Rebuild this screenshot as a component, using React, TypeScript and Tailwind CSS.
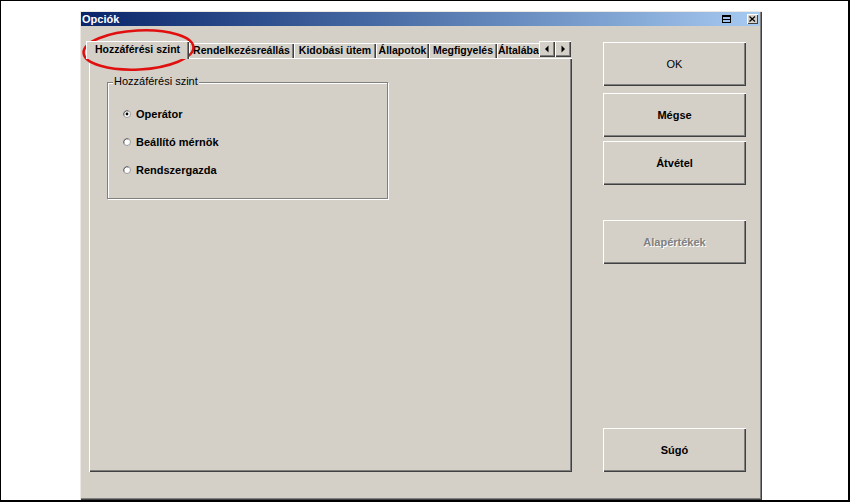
import React from "react";

const raised =
  "shadow-[inset_1px_1px_#ffffff,inset_-1px_-1px_#404040,inset_-2px_-2px_#808080]";

function Tab({ label, w, selected }: { label: string; w: string; selected?: boolean }) {
  if (selected) {
    return (
      <div
        className={`${w} -ml-[3px] h-[18px] self-start relative z-10 bg-[#d4d0c8] flex items-center justify-center text-[10.5px] font-bold text-black shadow-[inset_1px_1px_#ffffff,inset_-1px_0_#404040,inset_-2px_0_#808080]`}
      >
        {label}
      </div>
    );
  }
  return (
    <div
      className={`${w} h-[15px] bg-[#d4d0c8] flex items-center justify-center text-[10.5px] font-bold text-black overflow-hidden whitespace-nowrap shadow-[inset_1px_1px_#ffffff,inset_-1px_0_#404040,inset_-2px_0_#808080]`}
    >
      {label}
    </div>
  );
}

function Arrow({ dir }: { dir: "l" | "r" }) {
  return (
    <div className={`w-[16px] h-[16px] self-start bg-[#d4d0c8] flex items-center justify-center ${raised}`}>
      <svg width="8" height="8" viewBox="0 0 8 8">
        {dir === "l" ? <polygon points="5.5,0.5 5.5,7.5 2,4" fill="#000" /> : <polygon points="2.5,0.5 2.5,7.5 6,4" fill="#000" />}
      </svg>
    </div>
  );
}

function Radio({ label, checked }: { label: string; checked?: boolean }) {
  return (
    <div className="h-[28px] flex items-center gap-[5px]">
      <svg width="8" height="8" viewBox="0 0 8 8" className="shrink-0">
        <circle cx="4" cy="4" r="3.5" fill="#ffffff" stroke="#9a9a9a" strokeWidth="1" />
        <path d="M1 5.5 A3.5 3.5 0 0 1 5.5 1" fill="none" stroke="#606060" strokeWidth="1" />
        {checked && <circle cx="4" cy="4" r="1.4" fill="#000" />}
      </svg>
      <span className="text-[11px] font-bold text-black leading-none">{label}</span>
    </div>
  );
}

function Btn({ label, bold, disabled, extra }: { label: string; bold?: boolean; disabled?: boolean; extra?: string }) {
  return (
    <div
      className={`w-[143px] h-[44px] shrink-0 bg-[#d4d0c8] flex items-center justify-center text-[11px] ${raised} ${
        bold ? "font-bold" : "font-normal"
      } ${disabled ? "text-[#808080] [text-shadow:1px_1px_0_#ffffff]" : "text-black"} ${extra ?? ""}`}
    >
      {label}
    </div>
  );
}

export default function App() {
  return (
    <div
      className="relative w-[851px] h-[502px] bg-white overflow-hidden"
      style={{ fontFamily: '"Liberation Sans", Arial, sans-serif' }}
    >
      <div className="w-[850px] h-[502px] border-l border-t border-r-2 border-b-2 border-black">
        {/* dialog */}
        <div
          className={`ml-[79px] mt-[10px] w-[682px] h-[489px] bg-[#d4d0c8] flex flex-col pl-px pt-px pr-[2px] pb-[2px] shadow-[inset_1px_1px_#ece9e4,inset_-1px_-1px_#404040,inset_-2px_-2px_#808080]`}
        >
          {/* title bar */}
          <div className="h-[14px] flex items-center bg-linear-to-r from-[#0a246a] to-[#a6caf0] pl-[1px] pr-[2px]">
            <span className="text-[11px] font-bold text-white leading-none">Opciók</span>
            <div className="ml-auto flex items-center">
              <svg width="9" height="8" viewBox="0 0 9 8" className="mr-[16px]">
                <rect x="0.5" y="0.5" width="8" height="7" fill="none" stroke="#000" />
                <rect x="0" y="0" width="9" height="2" fill="#000" />
                <line x1="1" y1="4.5" x2="8" y2="4.5" stroke="#000" />
              </svg>
              <div className="w-[11px] h-[10px] bg-[#d4d0c8] flex items-center justify-center shadow-[inset_1px_1px_#ffffff,inset_-1px_-1px_#404040]">
                <svg width="7" height="6" viewBox="0 0 7 6">
                  <path d="M0.5 0.5 L6 5.5 M6 0.5 L0.5 5.5" stroke="#000" strokeWidth="1.2" />
                </svg>
              </div>
            </div>
          </div>

          {/* content */}
          <div className="flex flex-1 pl-[8px] pt-[15px]">
            {/* tab control */}
            <div className="w-[483px] flex flex-col">
              <div className="h-[17px] flex items-end">
                <Tab label="Hozzáférési szint" w="w-[103px]" selected />
                <Tab label="Rendelkezésreállás" w="w-[105px]" />
                <Tab label="Kidobási ütem" w="w-[82px]" />
                <Tab label="Állapotok" w="w-[53px]" />
                <Tab label="Megfigyelés" w="w-[68px]" />
                <div className="w-[42px] h-[15px] bg-[#d4d0c8] flex items-center pl-[1px] text-[10.5px] font-bold text-black whitespace-nowrap shadow-[inset_1px_1px_#ffffff]">
                  Általába
                </div>
                <Arrow dir="l" />
                <Arrow dir="r" />
              </div>
              <div className={`h-[414px] bg-[#d4d0c8] pl-[18px] pt-[24px] ${raised}`}>
                <div className="relative w-[281px] h-[117px] border border-[#808080] shadow-[1px_1px_0_#ffffff,inset_1px_1px_0_#ffffff] pl-[15px] pt-[17px]">
                  <span className="absolute left-[5px] -top-[7px] bg-[#d4d0c8] px-[1px] text-[11px] leading-none text-black">
                    Hozzáférési szint
                  </span>
                  <Radio label="Operátor" checked />
                  <Radio label="Beállító mérnök" />
                  <Radio label="Rendszergazda" />
                </div>
              </div>
            </div>

            {/* buttons */}
            <div className="ml-[31px] mt-[1px] h-[430px] flex flex-col">
              <Btn label="OK" />
              <Btn label="Mégse" bold extra="mt-[7px]" />
              <Btn label="Átvétel" bold extra="mt-[4px]" />
              <Btn label="Alapértékek" bold disabled extra="mt-[35px]" />
              <div className="mt-auto">
                <Btn label="Súgó" bold />
              </div>
            </div>
          </div>
        </div>
      </div>

      {/* red annotation ellipse */}
      <svg className="absolute left-0 top-0 pointer-events-none" width="851" height="502">
        <ellipse cx="138.5" cy="50" rx="55" ry="19.5" fill="none" stroke="#e01010" strokeWidth="2.5" transform="rotate(-3 138.5 50)" />
      </svg>
    </div>
  );
}
